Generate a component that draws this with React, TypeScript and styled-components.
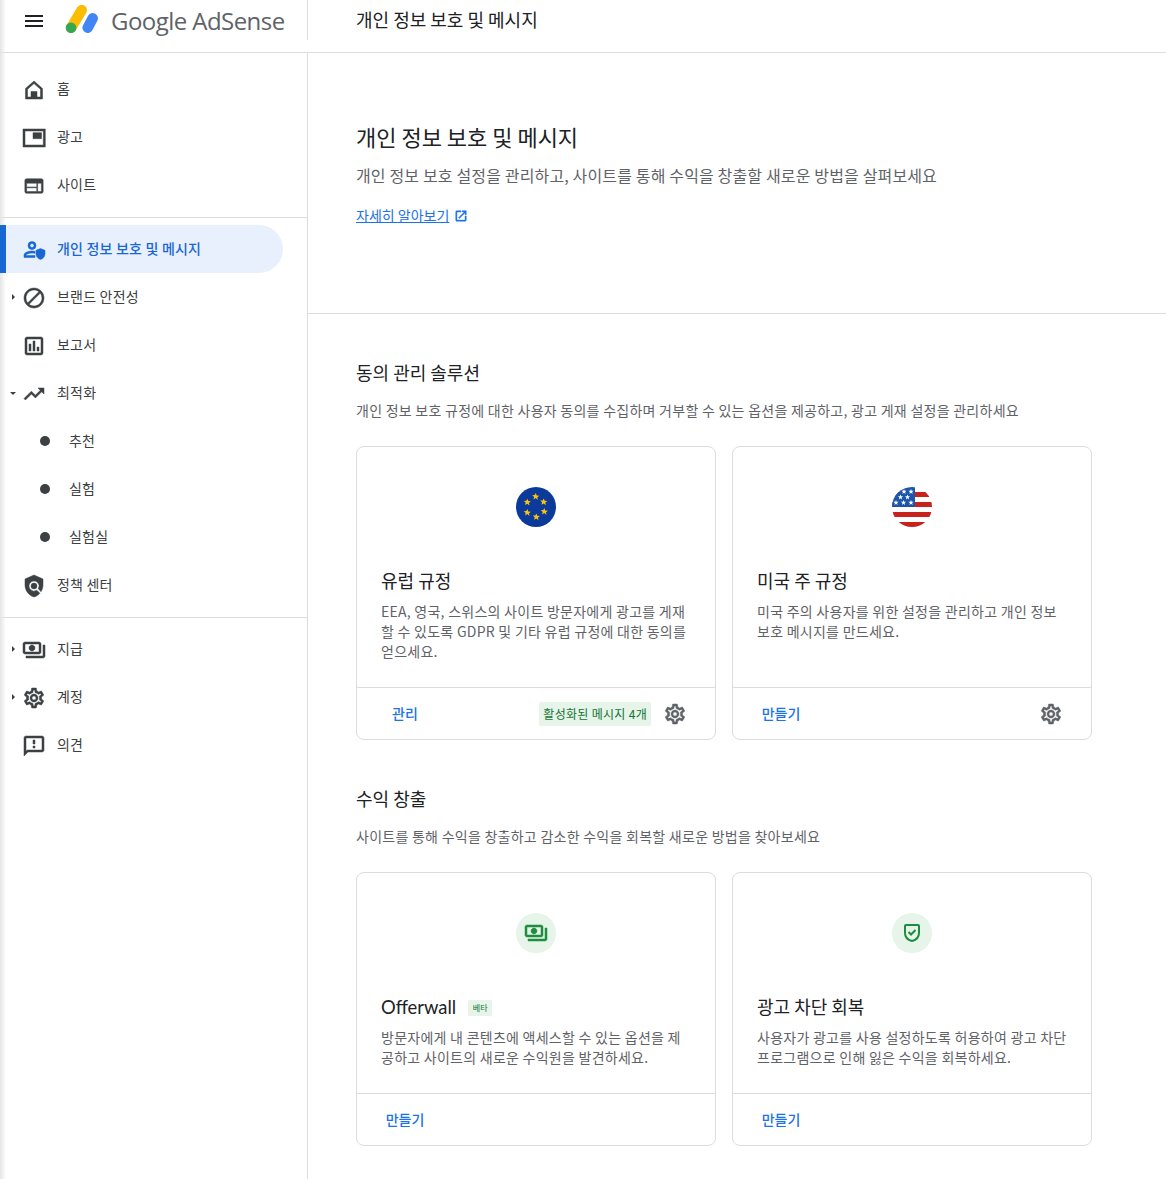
import React from 'react'
import styled, { createGlobalStyle } from 'styled-components'
import {
	MdBlock,
	MdMenu,
	MdOpenInNew,
	MdOutlineAssessment,
	MdOutlineFeedback,
	MdOutlinePayments,
	MdOutlineSettings,
	MdPolicy,
	MdTrendingUp,
	MdWeb,
} from 'react-icons/md'

const FONT = `"Noto Sans CJK KR", "Noto Sans", Roboto, sans-serif`

const GlobalStyle = createGlobalStyle`
	html, body {
		margin: 0;
		height: 100%;
		background: #fff;
		overflow: hidden;
	}
	body {
		font-family: ${FONT};
		color: #3c4043;
	}
	* {
		box-sizing: border-box;
	}
`

function HomeIcon() {
	return (
		<svg width="24" height="24" viewBox="0 0 24 24" fill="currentColor">
			<path d="M12 3l8.500 7.500V21h-17V10.500zM12 5.600l-6.500 5.700V19h13v-7.700z" fillRule="evenodd" />
			<path d="M9 13.500h6V20H9z" />
		</svg>
	)
}

function AdIcon() {
	return (
		<svg width="24" height="24" viewBox="0 0 24 24" fill="currentColor">
			<path d="M1 3h22.300v18H1zM3 5v14h18.300V5z" fillRule="evenodd" />
			<path d="M11 6.700h8.500v6H11z" />
		</svg>
	)
}

function PrivacyIcon() {
	return (
		<svg width="24" height="24" viewBox="0 0 24 24" fill="currentColor">
			<path d="M10 3.500a4 4 0 1 1 0 8 4 4 0 0 1 0-8zm0 2a2 2 0 1 0 0 4 2 2 0 0 0 0-4z" fillRule="evenodd" />
			<path d="M10 13c1 0 2 .1 3 .4v2c-1-.3-2-.4-3-.4-2.800 0-5.500 1.100-6 2v.5h9v2H2v-2.500c0-2.600 5.300-4 8-4z" />
			<path d="M18.500 10.500l4.500 1.800v3.400c0 2.800-1.900 5.300-4.500 5.800-2.600-.5-4.500-3-4.500-5.800v-3.400z" />
		</svg>
	)
}

function ShieldCheckIcon() {
	return (
		<svg width="24" height="24" viewBox="0 0 24 24" fill="none" stroke="currentColor" strokeWidth="2">
			<path d="M6 4h12a1 1 0 0 1 1 1v7c0 4.400-3 7-7 8-4-1-7-3.600-7-8V5a1 1 0 0 1 1-1z" strokeLinejoin="round" />
			<path d="M8.500 11l2.500 2.500 4.500-4.500" />
		</svg>
	)
}

function EuFlag() {
	const stars = [
		[19.7, 9.7],
		[27.7, 15],
		[28.3, 24.7],
		[20.3, 30],
		[11.3, 25.7],
		[11.3, 15.3],
	]
	return (
		<svg width="40" height="40" viewBox="0 0 40 40">
			<circle cx="20" cy="20" r="20" fill="#0b3a9b" />
			{stars.map(([x, y]) => (
				<path
					key={x + '-' + y}
					transform={`translate(${x} ${y})`}
					fill="#fcc30b"
					d="M0-3.600l1 2.400 2.500.2-1.900 1.700.6 2.500L0 1.400l-2.200 1.400.6-2.500-1.900-1.700 2.500-.2z"
				/>
			))}
		</svg>
	)
}

function UsFlag() {
	const stars = [
		[12, 4.5],
		[19, 4.5],
		[8.5, 10],
		[15.5, 10],
		[4, 15.5],
		[11.5, 15.5],
		[19, 15.5],
	]
	return (
		<svg width="40" height="40" viewBox="0 0 40 40">
			<defs>
				<clipPath id="us-flag-circle">
					<circle cx="20" cy="20" r="20" />
				</clipPath>
			</defs>
			<g clipPath="url(#us-flag-circle)">
				<rect width="40" height="40" fill="#fff" />
				<rect y="5" width="40" height="5" fill="#c8221f" />
				<rect y="15" width="40" height="5" fill="#c8221f" />
				<rect y="25" width="40" height="5" fill="#c8221f" />
				<rect y="35" width="40" height="5" fill="#c8221f" />
				<rect width="23" height="20" fill="#1c56a8" />
				{stars.map(([x, y]) => (
					<path
						key={x + '-' + y}
						transform={`translate(${x} ${y})`}
						fill="#fff"
						d="M0-2.600l.7 1.800 1.900.1-1.500 1.200.5 1.900L0 1.300l-1.600 1.100.5-1.900-1.500-1.200 1.900-.1z"
					/>
				))}
			</g>
		</svg>
	)
}

type NavEntry = {
	label: string
	icon?: React.ReactNode
	arrow?: 'right' | 'down'
	active?: boolean
	sub?: boolean
}

const NAV_GROUPS: NavEntry[][] = [
	[
		{ label: '홈', icon: <HomeIcon /> },
		{ label: '광고', icon: <AdIcon /> },
		{ label: '사이트', icon: <MdWeb size={22} /> },
	],
	[
		{ label: '개인 정보 보호 및 메시지', icon: <PrivacyIcon />, active: true },
		{ label: '브랜드 안전성', icon: <MdBlock size={24} />, arrow: 'right' },
		{ label: '보고서', icon: <MdOutlineAssessment size={24} /> },
		{ label: '최적화', icon: <MdTrendingUp size={24} />, arrow: 'down' },
		{ label: '추천', sub: true },
		{ label: '실험', sub: true },
		{ label: '실험실', sub: true },
		{ label: '정책 센터', icon: <MdPolicy size={24} /> },
	],
	[
		{ label: '지급', icon: <MdOutlinePayments size={24} />, arrow: 'right' },
		{ label: '계정', icon: <MdOutlineSettings size={24} />, arrow: 'right' },
		{ label: '의견', icon: <MdOutlineFeedback size={24} /> },
	],
]

export default function App() {
	return (
		<Page>
			<GlobalStyle />
			<Header>
				<Brand>
					<MenuButton>
						<MdMenu size={24} />
					</MenuButton>
					<svg width="34" height="34" viewBox="0 0 34 34">
						<path d="M6.300 24.700L16.700 7" stroke="#fbbc04" strokeWidth="10.500" strokeLinecap="round" />
						<path d="M22.700 24.700L27.700 15.300" stroke="#4285f4" strokeWidth="10.500" strokeLinecap="round" />
						<circle cx="6" cy="24.700" r="5.300" fill="#34a853" />
					</svg>
					<Wordmark>Google AdSense</Wordmark>
				</Brand>
				<HeaderTitle>개인 정보 보호 및 메시지</HeaderTitle>
			</Header>

			<Body>
				<Sidebar>
					{NAV_GROUPS.map((group, i) => (
						<NavGroup key={i}>
							{group.map((entry) => (
								<NavItem key={entry.label} $active={entry.active} $sub={entry.sub}>
									{entry.sub ? (
										<SubDot />
									) : (
										<>
											<ArrowSlot>{entry.arrow && <Arrow $dir={entry.arrow} />}</ArrowSlot>
											<NavIcon>{entry.icon}</NavIcon>
										</>
									)}
									<NavLabel>{entry.label}</NavLabel>
								</NavItem>
							))}
						</NavGroup>
					))}
				</Sidebar>

				<Main>
					<Hero>
						<PageTitle>개인 정보 보호 및 메시지</PageTitle>
						<HeroText>
							개인 정보 보호 설정을 관리하고, 사이트를 통해 수익을 창출할 새로운 방법을 살펴보세요
						</HeroText>
						<LearnMore>
							<a href="#learn">자세히 알아보기</a>
							<MdOpenInNew size={14} />
						</LearnMore>
					</Hero>

					<Section>
						<SectionTitle>동의 관리 솔루션</SectionTitle>
						<SectionText>
							개인 정보 보호 규정에 대한 사용자 동의를 수집하며 거부할 수 있는 옵션을 제공하고, 광고 게재 설정을 관리하세요
						</SectionText>
						<CardGrid>
							<Card>
								<CardBody>
									<CardIcon>
										<EuFlag />
									</CardIcon>
									<CardTitle>유럽 규정</CardTitle>
									<CardText>
										EEA, 영국, 스위스의 사이트 방문자에게 광고를 게재할 수 있도록 GDPR 및 기타 유럽 규정에 대한 동의를 얻으세요.
									</CardText>
								</CardBody>
								<CardFooter>
									<TextButton>관리</TextButton>
									<FooterRight>
										<StatusChip>활성화된 메시지 4개</StatusChip>
										<GearButton>
											<MdOutlineSettings size={24} />
										</GearButton>
									</FooterRight>
								</CardFooter>
							</Card>
							<Card>
								<CardBody>
									<CardIcon>
										<UsFlag />
									</CardIcon>
									<CardTitle>미국 주 규정</CardTitle>
									<CardText>
										미국 주의 사용자를 위한 설정을 관리하고 개인 정보 보호 메시지를 만드세요.
									</CardText>
								</CardBody>
								<CardFooter>
									<TextButton>만들기</TextButton>
									<FooterRight>
										<GearButton>
											<MdOutlineSettings size={24} />
										</GearButton>
									</FooterRight>
								</CardFooter>
							</Card>
						</CardGrid>
					</Section>

					<Section>
						<SectionTitle>수익 창출</SectionTitle>
						<SectionText>
							사이트를 통해 수익을 창출하고 감소한 수익을 회복할 새로운 방법을 찾아보세요
						</SectionText>
						<CardGrid>
							<Card>
								<CardBody>
									<CardIcon $tinted>
										<PaymentsGlyph size={24} />
									</CardIcon>
									<CardTitle>
										<ProductName>Offerwall</ProductName>
										<BetaChip>베타</BetaChip>
									</CardTitle>
									<CardText>
										방문자에게 내 콘텐츠에 액세스할 수 있는 옵션을 제공하고 사이트의 새로운 수익원을 발견하세요.
									</CardText>
								</CardBody>
								<CardFooter>
									<TextButton>만들기</TextButton>
								</CardFooter>
							</Card>
							<Card>
								<CardBody>
									<CardIcon $tinted>
										<ShieldCheckIcon />
									</CardIcon>
									<CardTitle>광고 차단 회복</CardTitle>
									<CardText>
										사용자가 광고를 사용 설정하도록 허용하여 광고 차단 프로그램으로 인해 잃은 수익을 회복하세요.
									</CardText>
								</CardBody>
								<CardFooter>
									<TextButton>만들기</TextButton>
								</CardFooter>
							</Card>
						</CardGrid>
					</Section>
				</Main>
			</Body>
		</Page>
	)
}

const Page = styled.div`
	position: relative;
	height: 100vh;
	display: flex;
	flex-direction: column;
	overflow: hidden;

	&:after {
		content: '';
		position: absolute;
		top: 0;
		bottom: 0;
		left: 0;
		width: 6px;
		background: linear-gradient(to right, #e4e4e4, rgba(255, 255, 255, 0));
		pointer-events: none;
	}
`

const Header = styled.header`
	height: 53px;
	flex: none;
	display: flex;
	border-bottom: 1px solid #dadce0;
`

const Brand = styled.div`
	width: 308px;
	height: 40px;
	flex: none;
	display: flex;
	align-items: center;
	padding-left: 22px;
	border-right: 1px solid #dadce0;
`

const MenuButton = styled.div`
	display: flex;
	width: 24px;
	margin-right: 19px;
	color: #202124;
	position: relative;
	top: 1px;

	svg {
		display: block;
	}
`

const Wordmark = styled.div`
	margin-left: 12px;
	font-family: 'Open Sans', sans-serif;
	font-size: 24px;
	letter-spacing: -0.55px;
	color: #5f6368;
	white-space: nowrap;
`

const HeaderTitle = styled.div`
	padding-left: 48px;
	line-height: 38px;
	font-size: 18px;
	color: #202124;
`

const Body = styled.div`
	flex: 1;
	display: flex;
	min-height: 0;
`

const Sidebar = styled.nav`
	width: 308px;
	flex: none;
	border-right: 1px solid #dadce0;
`

const NavGroup = styled.div`
	padding: 7px 0 8px;
	border-bottom: 1px solid #dadce0;

	&:first-child {
		padding-top: 12px;
	}
	&:last-child {
		border-bottom: none;
	}
`

const NavItem = styled.div<{ $active?: boolean; $sub?: boolean }>`
	height: 48px;
	width: 283px;
	display: flex;
	align-items: center;
	position: relative;
	z-index: 1;
	padding-left: ${(p) => (p.$sub ? '40px' : p.$active ? '4px' : '10px')};
	font-size: 14px;
	letter-spacing: 0.2px;
	font-weight: ${(p) => (p.$active ? 500 : 400)};
	color: ${(p) => (p.$active ? '#1967d2' : '#3c4043')};
	background: ${(p) => (p.$active ? '#e8f0fe' : 'transparent')};
	border-left: ${(p) => (p.$active ? '6px solid #1967d2' : 'none')};
	border-radius: ${(p) => (p.$active ? '0 24px 24px 0' : '0')};
`

const NavLabel = styled.span`
	padding-bottom: 2px;
`

const ArrowSlot = styled.div`
	width: 11.5px;
	flex: none;
	display: flex;
`

const Arrow = styled.div<{ $dir: 'right' | 'down' }>`
	width: 0;
	height: 0;
	${(p) =>
		p.$dir === 'right'
			? `
		margin-left: 2px;
		border-top: 3.5px solid transparent;
		border-bottom: 3.5px solid transparent;
		border-left: 3.5px solid #3c4043;
	`
			: `
		border-left: 3px solid transparent;
		border-right: 3px solid transparent;
		border-top: 3.5px solid #3c4043;
	`}
`

const NavIcon = styled.div`
	width: 24px;
	height: 24px;
	flex: none;
	margin: 2px 11.5px 0 0;
	display: flex;
	align-items: center;
	justify-content: center;

	svg {
		stroke: currentColor;
		stroke-width: 0.5px;
	}
	svg path[fill='none'] {
		stroke: none;
	}
`

const SubDot = styled.div`
	width: 10px;
	height: 10px;
	flex: none;
	margin-right: 19px;
	border-radius: 50%;
	background: #3c4043;
`

const Main = styled.main`
	flex: 1;
	min-width: 0;
`

const Hero = styled.section`
	height: 261px;
	padding: 67px 0 0 48px;
	border-bottom: 1px solid #dadce0;
`

const PageTitle = styled.h1`
	margin: 0;
	font-size: 22px;
	line-height: 32px;
	font-weight: 400;
	color: #202124;
`

const HeroText = styled.p`
	margin: 9px 0 0;
	font-size: 16px;
	letter-spacing: 0.15px;
	line-height: 28px;
	color: #5f6368;
`

const LearnMore = styled.div`
	margin-top: 16px;
	display: flex;
	align-items: center;
	gap: 5px;
	font-size: 14px;
	line-height: 20px;
	color: #1a73e8;

	a {
		color: inherit;
	}
	svg {
		stroke: currentColor;
		stroke-width: 0.8px;
		position: relative;
		top: 1px;
	}
	svg path[fill='none'] {
		stroke: none;
	}
`

const Section = styled.section`
	padding: 46px 0 0 48px;
`

const SectionTitle = styled.h2`
	margin: 0;
	font-size: 18px;
	line-height: 24px;
	font-weight: 400;
	color: #202124;
`

const SectionText = styled.p`
	margin: 16px 0 0;
	font-size: 14px;
	letter-spacing: 0.26px;
	line-height: 20px;
	color: #5f6368;
`

const CardGrid = styled.div`
	margin-top: 26px;
	display: grid;
	grid-template-columns: 360px 360px;
	gap: 16px;
`

const Card = styled.article`
	display: flex;
	flex-direction: column;
	border: 1px solid #dadce0;
	border-radius: 8px;
`

const CardBody = styled.div`
	flex: 1;
	padding: 40px 24px 26px;
`

const CardIcon = styled.div<{ $tinted?: boolean }>`
	width: 40px;
	height: 40px;
	margin: 0 auto;
	display: flex;
	align-items: center;
	justify-content: center;
	border-radius: 50%;
	color: #1e8e3e;
	background: ${(p) => (p.$tinted ? '#e6f4ea' : 'transparent')};
`

const PaymentsGlyph = styled(MdOutlinePayments)`
	stroke: currentColor;
	stroke-width: 0.5px;

	path[fill='none'] {
		stroke: none;
	}
`

const CardTitle = styled.h3`
	margin: 41px 0 0;
	display: flex;
	align-items: center;
	gap: 12px;
	font-size: 18px;
	line-height: 24px;
	font-weight: 400;
	color: #202124;
`

const ProductName = styled.span`
	font-family: Lato, ${FONT};
	font-size: 18.4px;
	position: relative;
	top: 1px;
`

const BetaChip = styled.span`
	width: 24px;
	height: 16px;
	display: flex;
	align-items: center;
	justify-content: center;
	border-radius: 2px;
	font-size: 8px;
	color: #137333;
	background: #e6f4ea;
	position: relative;
	top: 2px;
`

const CardText = styled.p`
	margin: 9px 0 0;
	font-size: 14px;
	letter-spacing: 0.26px;
	line-height: 20px;
	color: #5f6368;
`

const CardFooter = styled.div`
	height: 52px;
	flex: none;
	display: flex;
	align-items: center;
	justify-content: space-between;
	padding-left: 16px;
	border-top: 1px solid #dadce0;
`

const TextButton = styled.button`
	min-width: 64px;
	height: 36px;
	padding: 0 0 2px;
	border: none;
	background: none;
	font-family: inherit;
	font-size: 14px;
	font-weight: 500;
	color: #1a73e8;
`

const FooterRight = styled.div`
	display: flex;
	align-items: center;
	gap: 4px;
	padding-right: 20px;
`

const StatusChip = styled.span`
	height: 24px;
	padding: 0 4px;
	display: flex;
	align-items: center;
	border-radius: 2px;
	font-size: 12px;
	letter-spacing: 0.3px;
	color: #137333;
	background: #e6f4ea;
`

const GearButton = styled.div`
	width: 40px;
	height: 40px;
	display: flex;
	align-items: center;
	justify-content: center;
	color: #5f6368;

	svg {
		stroke: currentColor;
		stroke-width: 0.5px;
	}
	svg path[fill='none'] {
		stroke: none;
	}
`
